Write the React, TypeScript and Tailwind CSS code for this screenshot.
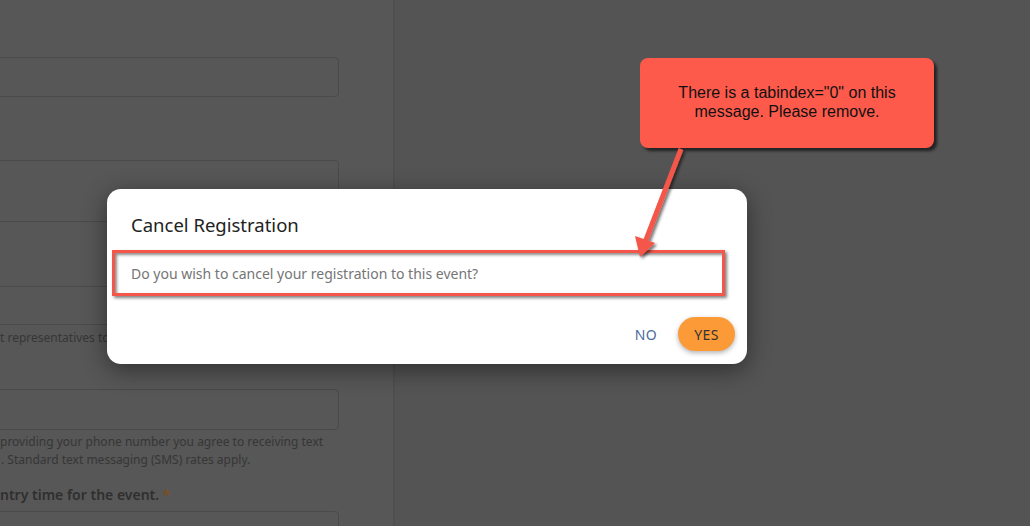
import React from "react"

const ui = { fontFamily: '"Noto Sans", "Open Sans", sans-serif' }

function FormBackground() {
  return (
    <div className="w-[395px] shrink-0 h-full bg-[#575757] border-r-2 border-[#4f4f4f] overflow-hidden" style={ui}>
      <div className="flex flex-col">
        <div className="mt-[57px] -ml-[10px] w-[349px] h-[40px] rounded border border-[#4a4a4a]" />
        <div className="mt-[63px] -ml-[10px] w-[349px] rounded border border-[#4a4a4a]">
          <div className="h-[61px] border-b border-[#4a4a4a]" />
          <div className="h-[65px] border-b border-[#4a4a4a]" />
          <div className="h-[37px]" />
        </div>
        <p className="mt-[4px] text-[12px] leading-[18px] text-[#363636] whitespace-nowrap">
          t representatives to contact you about this event.
        </p>
        <div className="mt-[42px] -ml-[10px] w-[349px] h-[41px] rounded border border-[#4a4a4a]" />
        <p className="mt-[3px] text-[12px] leading-[18px] text-[#363636] whitespace-nowrap">
          providing your phone number you agree to receiving text
          <br />
          <span className="ml-[1px]">. Standard text messaging (SMS) rates apply.</span>
        </p>
        <p className="mt-[16px] text-[14px] leading-[20px] font-semibold text-[#2f2f2f] whitespace-nowrap">
          ntry time for the event. <span className="text-[#7d4d20]">*</span>
        </p>
        <div className="mt-[6px] -ml-[10px] w-[349px] h-[40px] rounded border border-[#4a4a4a]" />
      </div>
    </div>
  )
}

function CancelDialog() {
  return (
    <div
      className="absolute left-[107px] top-[189px] w-[640px] h-[175px] rounded-[14px] bg-white shadow-[0_6px_24px_rgba(0,0,0,0.45)] flex flex-col"
      style={ui}
    >
      <h2 className="pt-[24px] pl-[24px] text-[18.5px] leading-[24px] text-[#222]">Cancel Registration</h2>
      <div className="shrink-0 mt-[13px] ml-[5px] w-[613px] h-[46px] border-[3px] border-[#f4564a] flex items-center pl-[16px] shadow-[2px_2px_3px_rgba(0,0,0,0.5),inset_2px_2px_3px_rgba(0,0,0,0.45)]">
        <span className="text-[14px] text-[#757575]">Do you wish to cancel your registration to this event?</span>
      </div>
      <div className="shrink-0 mt-[21px] pr-[12px] flex items-center justify-end gap-[21px]">
        <button className="text-[14px] text-[#4d6b9c] tracking-wide">NO</button>
        <button className="h-[34px] w-[57px] rounded-full bg-[#fd9a38] text-[14px] text-[#333] tracking-wide shadow-[0_2px_5px_rgba(0,0,0,0.3)]">
          YES
        </button>
      </div>
    </div>
  )
}

function Annotation() {
  return (
    <>
      <div
        className="absolute left-[640px] top-[58px] w-[294px] h-[90px] rounded-[8px] bg-[#fd5a4c] shadow-[3px_3px_3px_rgba(0,0,0,0.6)] flex items-center justify-center text-center text-[16px] leading-[19px] text-[#111] pb-[2px]"
        style={{ fontFamily: '"Liberation Sans", Arial, sans-serif' }}
      >
        There is a tabindex="0" on this
        <br />
        message. Please remove.
      </div>
      <svg className="absolute left-0 top-0 pointer-events-none" width="1030" height="526">
        <defs>
          <filter id="sh" x="-50%" y="-50%" width="200%" height="200%">
            <feDropShadow dx="2" dy="2" stdDeviation="1.5" floodColor="#000" floodOpacity="0.55" />
          </filter>
        </defs>
        <g filter="url(#sh)">
          <line x1="681" y1="149" x2="644" y2="245" stroke="#f4564a" strokeWidth="5" />
          <polygon points="640,257 635,236 655,243" fill="#f4564a" />
        </g>
      </svg>
    </>
  )
}

export default function App() {
  return (
    <div className="relative w-[1030px] h-[526px] overflow-hidden bg-[#545454] flex">
      <FormBackground />
      <CancelDialog />
      <Annotation />
    </div>
  )
}
